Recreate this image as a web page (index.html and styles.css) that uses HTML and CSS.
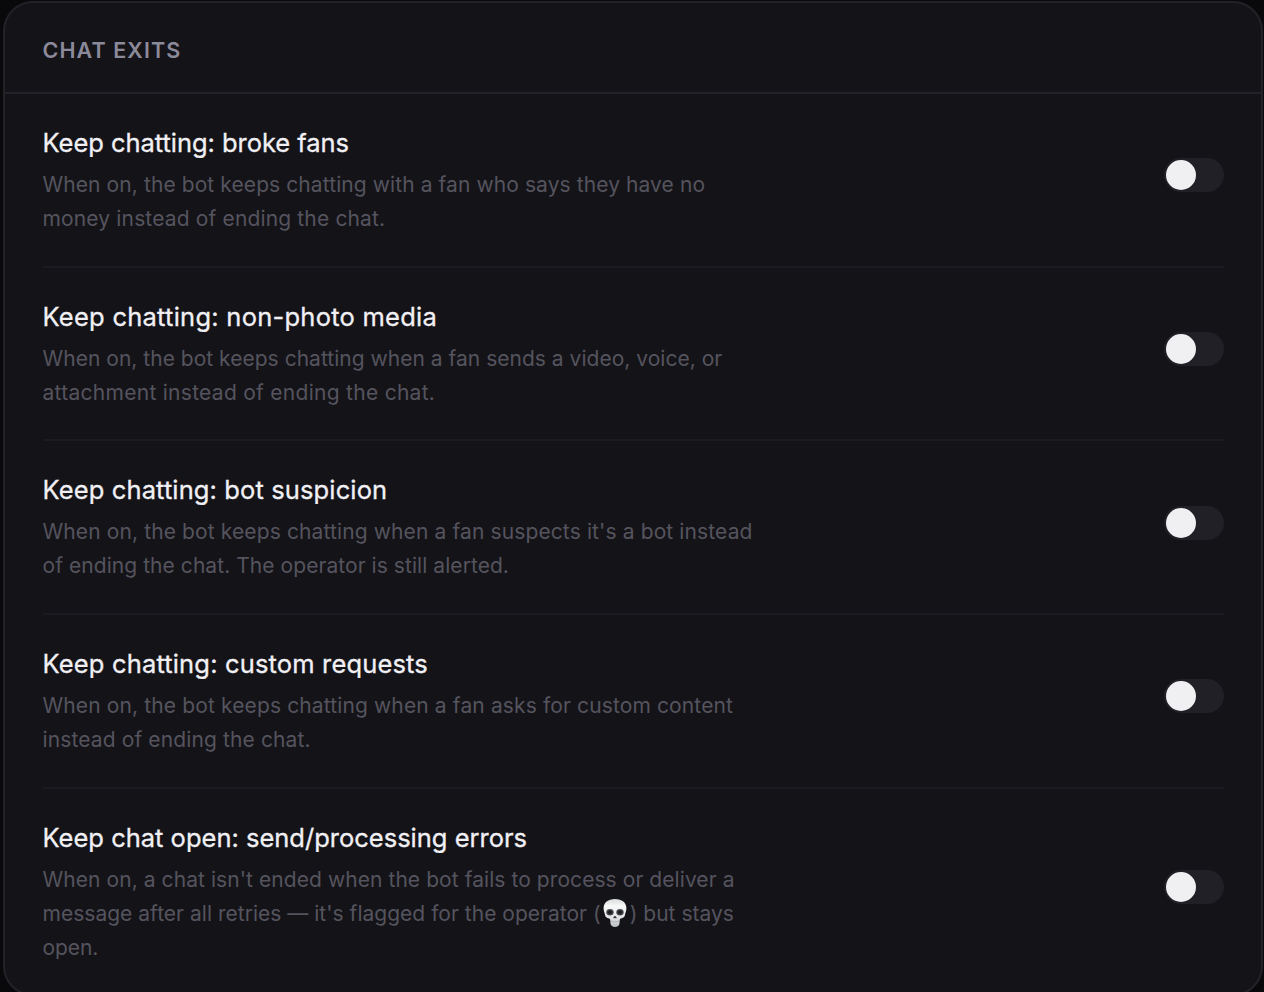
FILE: index.html
```html
<!DOCTYPE html>
<html lang="en">
<head>
    <meta charset="UTF-8">
    <title>Chat Exits</title>
    <meta name="viewport" content="width=device-width, initial-scale=1.0">
    <link rel="stylesheet" href="styles.css">
</head>
<body>
    <section class="card">
        <h2 class="card-title">CHAT EXITS</h2>

        <div class="settings">
            <div class="setting">
                <div class="setting-text">
                    <h3 class="t1">Keep chatting: broke fans</h3>
                    <p><span class="d1">When on, the bot keeps chatting with a fan who says they have no</span><br>
                    <span class="d2">money instead of ending the chat.</span></p>
                </div>
                <button class="toggle" role="switch" aria-checked="false"></button>
            </div>

            <div class="setting">
                <div class="setting-text">
                    <h3 class="t2">Keep chatting: non-photo media</h3>
                    <p><span class="d3">When on, the bot keeps chatting when a fan sends a video, voice, or</span><br>
                    <span class="d4">attachment instead of ending the chat.</span></p>
                </div>
                <button class="toggle" role="switch" aria-checked="false"></button>
            </div>

            <div class="setting">
                <div class="setting-text">
                    <h3 class="t3">Keep chatting: bot suspicion</h3>
                    <p><span class="d5">When on, the bot keeps chatting when a fan suspects it's a bot instead</span><br>
                    <span class="d6">of ending the chat. The operator is still alerted.</span></p>
                </div>
                <button class="toggle" role="switch" aria-checked="false"></button>
            </div>

            <div class="setting">
                <div class="setting-text">
                    <h3 class="t4">Keep chatting: custom requests</h3>
                    <p><span class="d7">When on, the bot keeps chatting when a fan asks for custom content</span><br>
                    <span class="d8">instead of ending the chat.</span></p>
                </div>
                <button class="toggle" role="switch" aria-checked="false"></button>
            </div>

            <div class="setting">
                <div class="setting-text">
                    <h3 class="t5">Keep chat open: send/processing errors</h3>
                    <p><span class="d9">When on, a chat isn't ended when the bot fails to process or deliver a</span><br>
                    <span class="d10">message after all retries — it's flagged for the operator (<svg class="skull" viewBox="0 0 28 30" role="img" aria-label="skull">
                        <defs>
                            <linearGradient id="bone" x1="0" y1="0" x2="0" y2="1">
                                <stop offset="0" stop-color="#d8dadb"/>
                                <stop offset=".25" stop-color="#f7f8f8"/>
                                <stop offset=".65" stop-color="#e4e5e6"/>
                                <stop offset="1" stop-color="#b9bcbe"/>
                            </linearGradient>
                            <radialGradient id="socket">
                                <stop offset=".35" stop-color="#1b1c1f"/>
                                <stop offset="1" stop-color="#55585c"/>
                            </radialGradient>
                        </defs>
                        <path fill="url(#bone)" d="M14 1C7 1 2.600 4.600 2.600 10.200c0 2.600.9 4 1.200 5.800.3 2 .8 3.300 2.600 4 1.200.5 2.300.5 2.700 1.400.4.9.2 2.400.4 4.100.3 2.300 2 3.500 4.500 3.500s4.200-1.200 4.500-3.500c.2-1.700 0-3.200.4-4.100.4-.9 1.500-.9 2.700-1.400 1.800-.7 2.300-2 2.600-4 .3-1.800 1.200-3.200 1.200-5.800C25.400 4.600 21 1 14 1z"/>
                        <ellipse cx="9" cy="14.300" rx="3.700" ry="3.200" fill="url(#socket)"/>
                        <ellipse cx="19" cy="14.300" rx="3.700" ry="3.200" fill="url(#socket)"/>
                        <path fill="#33363a" d="M14 18c-.9 0-1.700 1.300-1.600 1.900.1.500 1 .3 1.600 0 .6.3 1.500.5 1.600 0 .1-.6-.7-1.900-1.600-1.900z"/>
                        <path fill="none" stroke="#a5a8ab" stroke-width=".7" d="M10 23c2.400 1 5.600 1 8 0"/>
                    </svg>) but stays</span><br>
                    <span class="d11">open.</span></p>
                </div>
                <button class="toggle" role="switch" aria-checked="false"></button>
            </div>
        </div>
    </section>
</body>
</html>
```
FILE: styles.css
```css
* {
    box-sizing: border-box;
}

body {
    background-color: #09090b;
    font-family: "Inter", sans-serif;
    margin: 0;
    padding: 1px 1px 0 3px;
    height: 992px;
    overflow: hidden;
}

.card {
    width: 1260px;
    height: 995px;
    background-color: #141318;
    border: 2px solid #232228;
    border-radius: 30px;
}

.card-title {
    margin: 0;
    height: 91px;
    padding: 0 37.5px;
    border-bottom: 2px solid #232228;
    color: #8b8a9a;
    font-size: 21.5px;
    font-weight: 600;
    line-height: 94px;
    letter-spacing: 1.1px;
}

.settings {
    padding: 0 37px 0 37.5px;
}

.setting {
    display: flex;
    align-items: center;
    justify-content: space-between;
    height: 173.7px;
    padding-top: 2px;
    border-bottom: 2px solid #1b1a20;
}

.setting:last-child {
    height: 206px;
    border-bottom: none;
}

.setting-text {
    white-space: nowrap;
}

h3 {
    margin: 0 0 8px;
    color: #f1f0f4;
    font-size: 25.5px;
    font-weight: 400;
    line-height: 34px;
    -webkit-text-stroke: 0.3px #f1f0f4;
}

p {
    margin: 0;
    color: #55545e;
    font-size: 21px;
    line-height: 34px;
}

/* tracking per line */
.t1 { letter-spacing: -0.04px; }
.t2 { letter-spacing: 0.25px; }
.t3 { letter-spacing: 0.12px; }
.t4 { letter-spacing: 0.16px; }
.t5 { letter-spacing: 0; }

.d1 { letter-spacing: 0.09px; }
.d2 { letter-spacing: 0.15px; }
.d3 { letter-spacing: 0.02px; }
.d4 { letter-spacing: 0.28px; }
.d5 { letter-spacing: 0.12px; }
.d6 { letter-spacing: 0.06px; }
.d7 { letter-spacing: 0.13px; }
.d8 { letter-spacing: 0.12px; }
.d9 { letter-spacing: 0.07px; }
.d10 { letter-spacing: 0.02px; }
.d11 { letter-spacing: -0.1px; }

.toggle {
    flex: none;
    width: 60px;
    height: 34px;
    margin: 0 0 11px;
    padding: 2px;
    border: none;
    border-radius: 17px;
    background-color: #212026;
}

.toggle::before {
    content: "";
    display: block;
    width: 30px;
    height: 30px;
    border-radius: 50%;
    background-color: #f0eff2;
}

.skull {
    width: 28px;
    height: 30px;
    margin: -4px 1px -4px 0;
    vertical-align: -3px;
}
```
